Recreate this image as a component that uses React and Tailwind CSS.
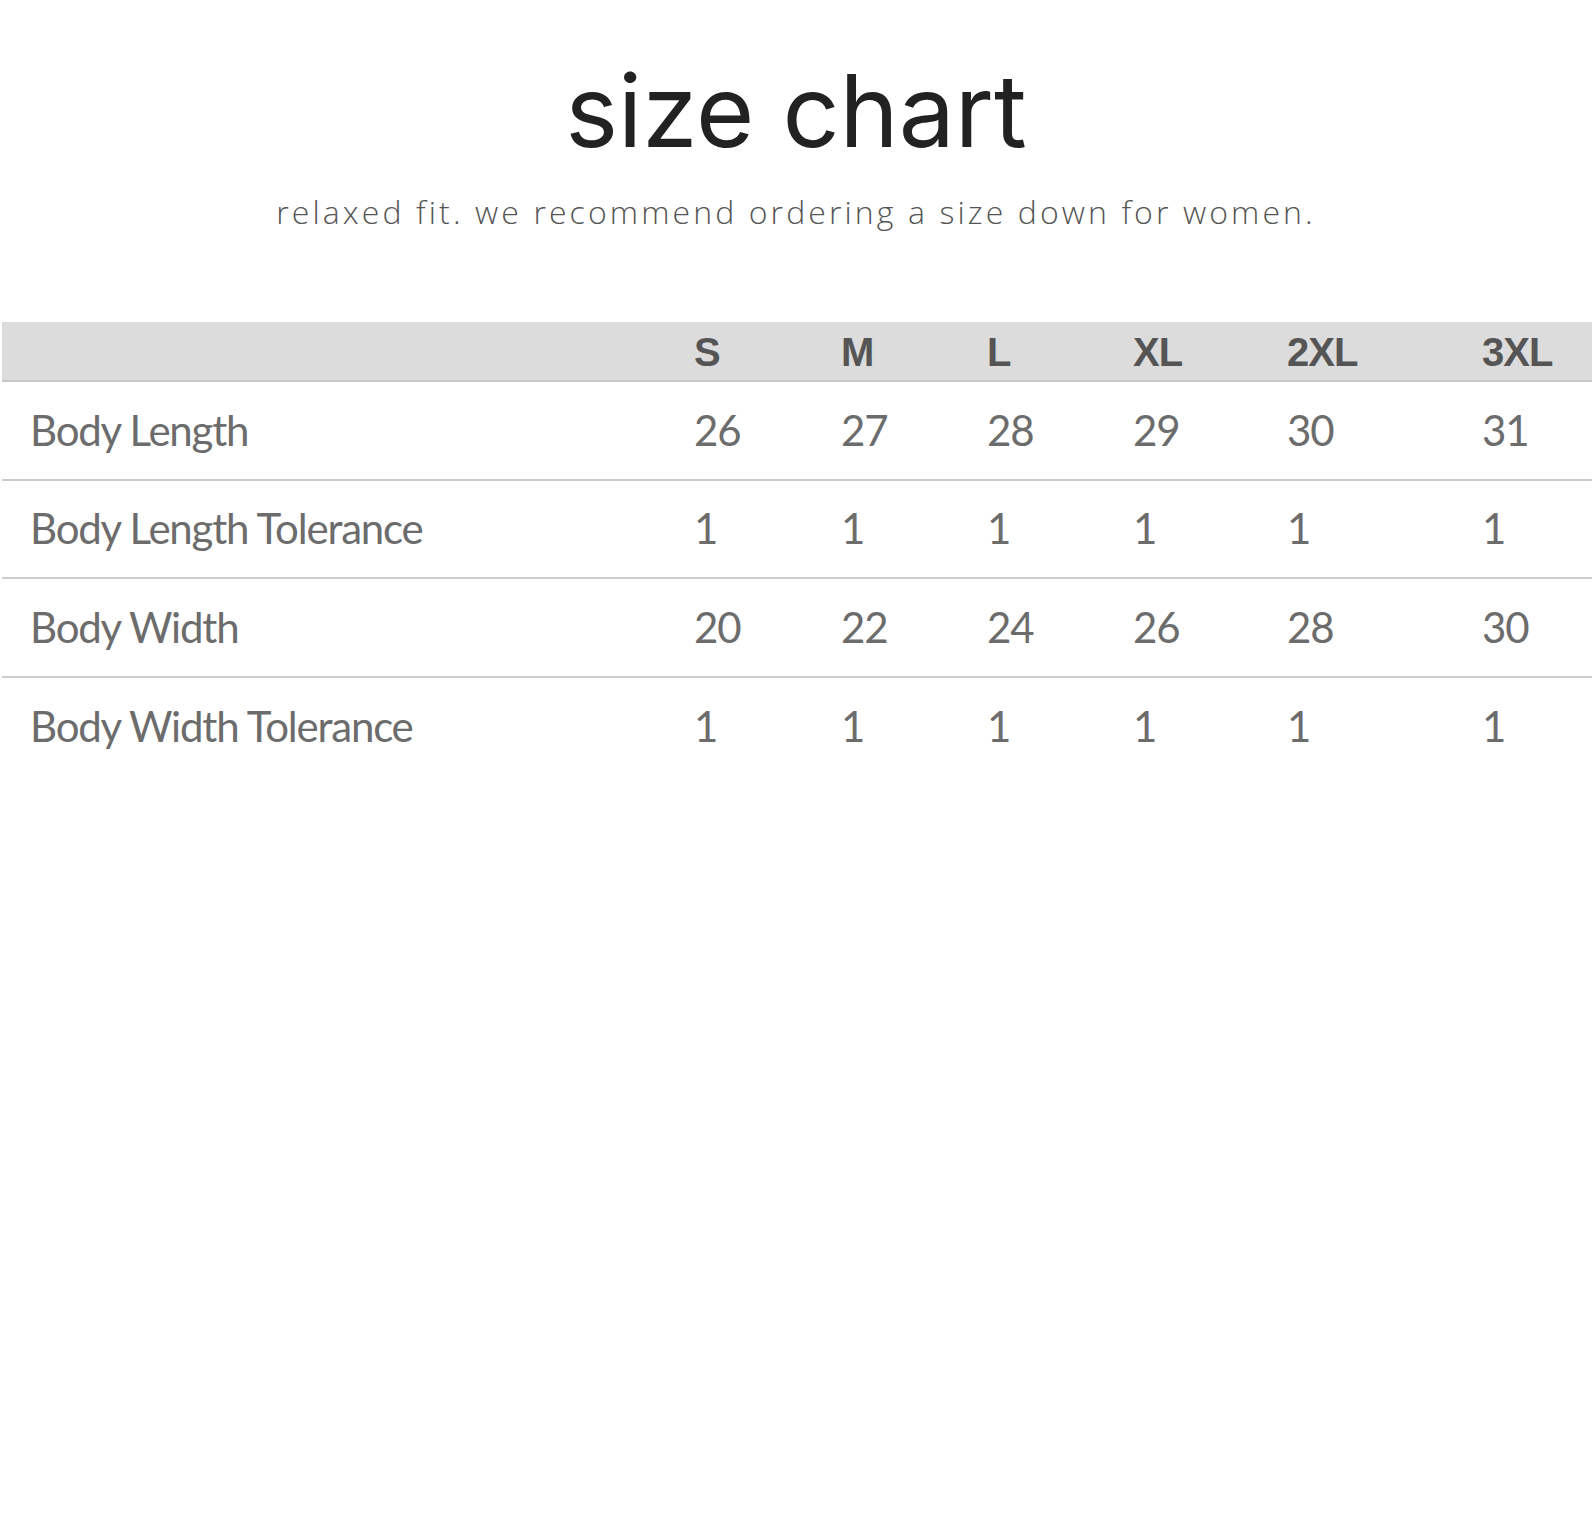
import React from "react";

const sizes = ["S", "M", "L", "XL", "2XL", "3XL"];
const rows = [
  ["Body Length", ["26", "27", "28", "29", "30", "31"]],
  ["Body Length Tolerance", ["1", "1", "1", "1", "1", "1"]],
  ["Body Width", ["20", "22", "24", "26", "28", "30"]],
  ["Body Width Tolerance", ["1", "1", "1", "1", "1", "1"]],
];

const grid = "grid grid-cols-[692px_147px_146px_146px_154px_195px_1fr]";

export default function App() {
  return (
    <div className="w-[1592px] min-h-[1532px] bg-white">
      <h1 className="pt-[61px] text-center text-[100px] leading-none text-[#222] font-normal [font-family:Inter,'Noto_Sans',sans-serif]">
        size chart
      </h1>
      <p className="mt-[35px] text-center text-[32px] leading-none tracking-[3.1px] text-[#555] font-light [font-family:'Open_Sans',sans-serif]">
        relaxed fit. we recommend ordering a size down for women.
      </p>
      <div className="mt-[94px] ml-[2px]">
        <div className={`${grid} h-[60px] items-center bg-[#dcdcdc] border-b-2 border-[#c8c8c8] text-[40px] font-bold tracking-[-1px] text-[#555] [font-family:'Liberation_Sans',sans-serif]`}>
          <div />
          {sizes.map((s) => (
            <div key={s}>{s}</div>
          ))}
        </div>
        {rows.map(([label, vals], i) => (
          <div
            key={label}
            className={`${grid} h-[98.5px] items-center text-[42px] tracking-[-1.2px] text-[#6c6c6c] [font-family:Lato,sans-serif] ${i < rows.length - 1 ? "border-b-2 border-[#cdcdcd]" : ""}`}
          >
            <div className="pl-[28px]">{label}</div>
            {vals.map((v, j) => (
              <div key={j}>{v}</div>
            ))}
          </div>
        ))}
      </div>
    </div>
  );
}
